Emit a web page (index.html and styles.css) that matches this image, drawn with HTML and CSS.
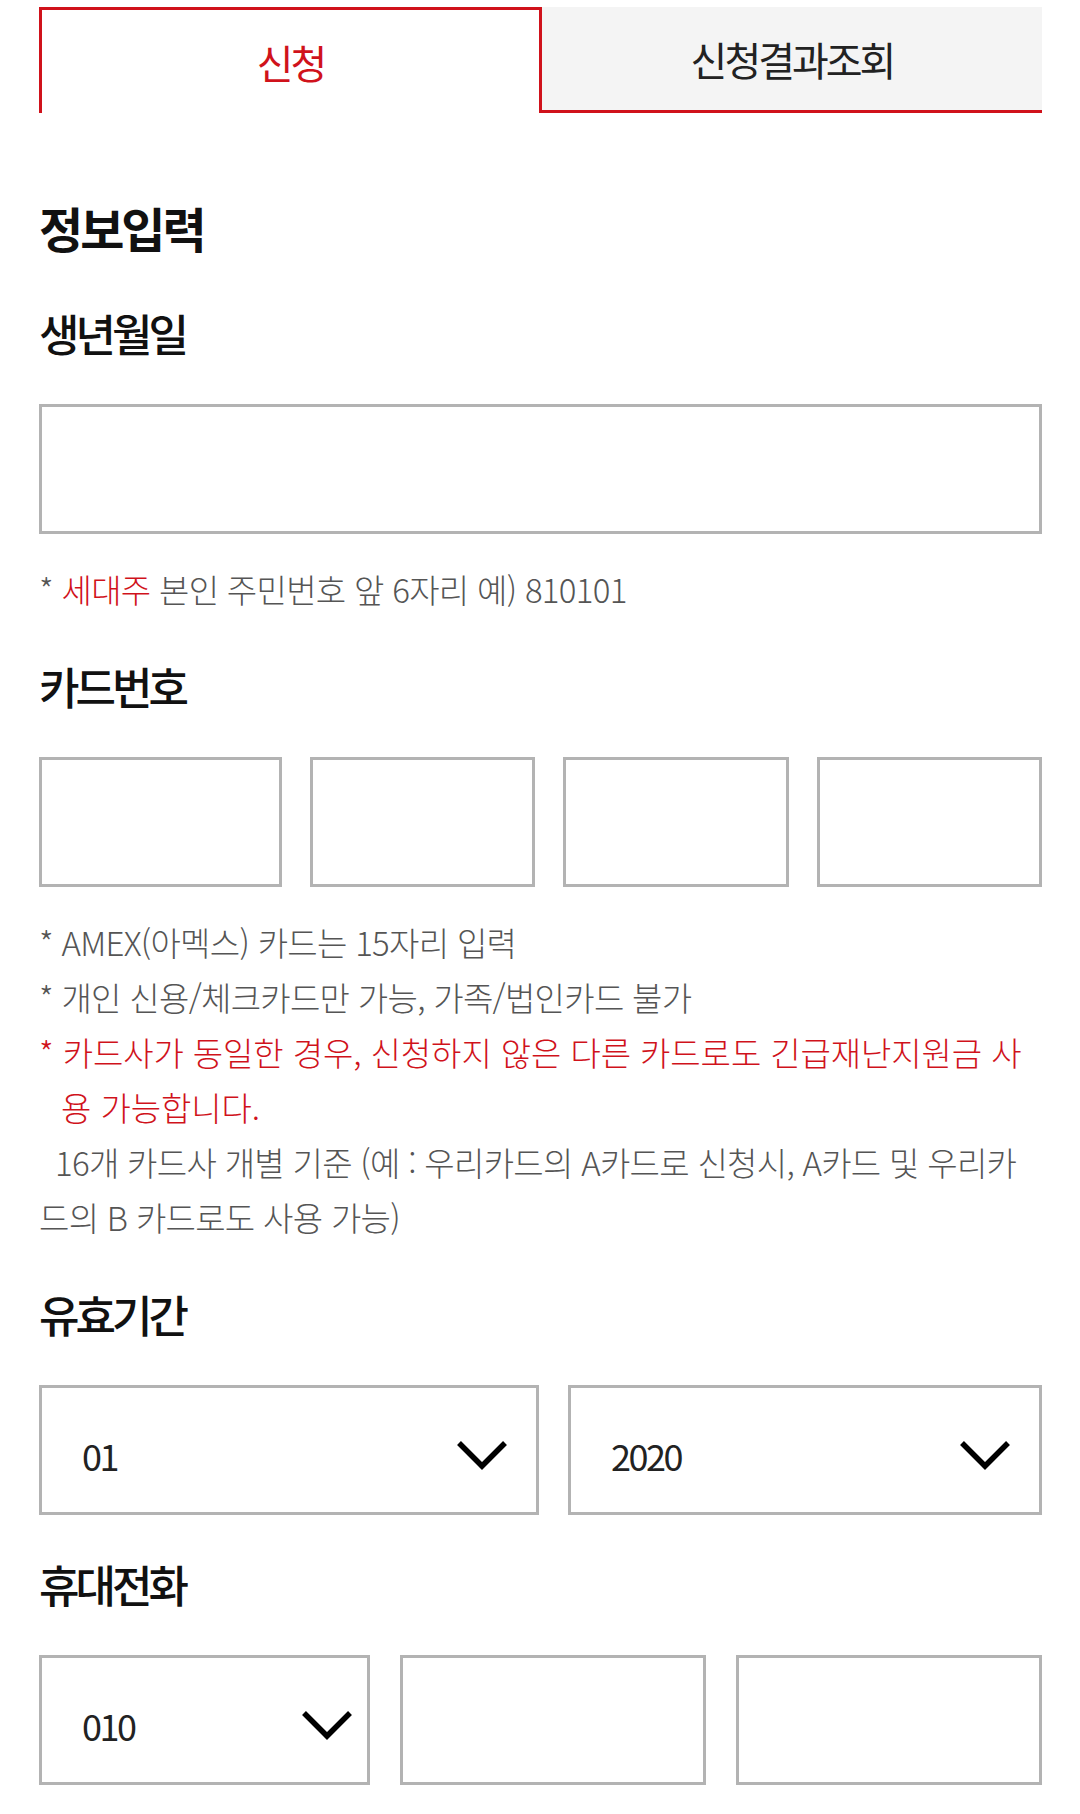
FILE: index.html
```html
<!DOCTYPE html>
<html lang="ko">
<head>
    <meta charset="UTF-8">
    <meta name="viewport" content="width=device-width, initial-scale=1.0">
    <title>긴급재난지원금 신청</title>
    <link rel="stylesheet" href="styles.css">
</head>
<body>
    <!-- Tabs -->
    <div class="tabs">
        <div class="tab active">신청</div>
        <div class="tab">신청결과조회</div>
    </div>

    <h2 class="page-title">정보입력</h2>

    <!-- Birth date -->
    <div class="section first">
        <label class="label" for="birth">생년월일</label>
        <input type="text" id="birth" class="box">
        <p class="note">* <span class="red">세대주</span> 본인 주민번호 앞 6자리 예) 810101</p>
    </div>

    <!-- Card number -->
    <div class="section">
        <label class="label" for="card1">카드번호</label>
        <div class="row card-row">
            <input type="text" id="card1" class="box">
            <input type="text" class="box">
            <input type="text" class="box">
            <input type="text" class="box">
        </div>
        <ul class="notes">
            <li>* AMEX(아멕스) 카드는 15자리 입력</li>
            <li>* 개인 신용/체크카드만 가능, 가족/법인카드 불가</li>
            <li class="red hang">* 카드사가 동일한 경우, 신청하지 않은 다른 카드로도 긴급재난지원금 사용 가능합니다.</li>
            <li class="indent">16개 카드사 개별 기준 (예 : 우리카드의 A카드로 신청시, A카드 및 우리카드의 B 카드로도 사용 가능)</li>
        </ul>
    </div>

    <!-- Expiry -->
    <div class="section">
        <div class="label">유효기간</div>
        <div class="row expiry-row">
            <div class="box select">
                <span>01</span>
                <svg class="chevron" width="52" height="30" viewBox="0 0 52 30"><polyline points="3,3 26,26 49,3" fill="none" stroke="#000" stroke-width="5.5"/></svg>
            </div>
            <div class="box select">
                <span>2020</span>
                <svg class="chevron" width="52" height="30" viewBox="0 0 52 30"><polyline points="3,3 26,26 49,3" fill="none" stroke="#000" stroke-width="5.5"/></svg>
            </div>
        </div>
    </div>

    <!-- Mobile phone -->
    <div class="section">
        <div class="label">휴대전화</div>
        <div class="row phone-row">
            <div class="box select small">
                <span>010</span>
                <svg class="chevron" width="52" height="30" viewBox="0 0 52 30"><polyline points="3,3 26,26 49,3" fill="none" stroke="#000" stroke-width="5.5"/></svg>
            </div>
            <input type="text" class="box">
            <input type="text" class="box">
        </div>
    </div>
</body>
</html>
```

FILE: styles.css
```css
body {
    font-family: "Noto Sans CJK KR", "Noto Sans", sans-serif;
    margin: 0;
    padding: 7px 38px 0 39px;
    background-color: #fff;
    color: #111;
}
.tabs {
    display: flex;
    height: 106px;
}
.tab {
    flex: 1;
    display: flex;
    align-items: center;
    justify-content: center;
    box-sizing: border-box;
    font-size: 40px;
    letter-spacing: -3px;
    color: #222;
    background-color: #f4f4f4;
    border-bottom: 3px solid #d0121b;
}
.tab.active {
    flex: none;
    width: 503px;
    color: #d0121b;
    background-color: #fff;
    border: 3px solid #d0121b;
    border-bottom: none;
}
.page-title {
    margin: 89px 0 0;
    font-size: 48px;
    line-height: 50px;
    font-weight: 700;
    letter-spacing: -3px;
}
.section {
    margin-top: 44px;
}
.section.first {
    margin-top: 56px;
}
.label {
    display: block;
    margin: 0 0 46px;
    font-size: 44px;
    line-height: 50px;
    font-weight: 500;
    letter-spacing: -4px;
}
.box {
    display: block;
    width: 100%;
    height: 130px;
    margin: 0;
    padding: 0;
    border: 3px solid #b3b3b3;
    border-radius: 0;
    box-sizing: border-box;
    background-color: #fff;
    font-family: inherit;
    font-size: 36px;
}
.row {
    display: grid;
}
.card-row {
    grid-template-columns: 243px repeat(3, 1fr);
    gap: 28px;
}
.expiry-row {
    grid-template-columns: 500px 1fr;
    gap: 29px;
}
.phone-row {
    grid-template-columns: 331px 1fr 1fr;
    gap: 30px;
}
.select {
    display: flex;
    align-items: center;
    justify-content: space-between;
    padding: 10px 28px 0 40px;
    color: #222;
    letter-spacing: -2.5px;
}
.select.small {
    padding-right: 14px;
}
.chevron {
    display: block;
}
.note,
.notes {
    margin: 28px 0 0;
    font-size: 33px;
    line-height: 55px;
    font-weight: 300;
    letter-spacing: -0.7px;
    color: #555;
}
.notes {
    padding: 0;
    list-style: none;
}
.red {
    color: #d0121b;
}
.hang {
    padding-left: 22px;
    text-indent: -22px;
    letter-spacing: -0.1px;
}
.indent {
    text-indent: 16px;
}
```
